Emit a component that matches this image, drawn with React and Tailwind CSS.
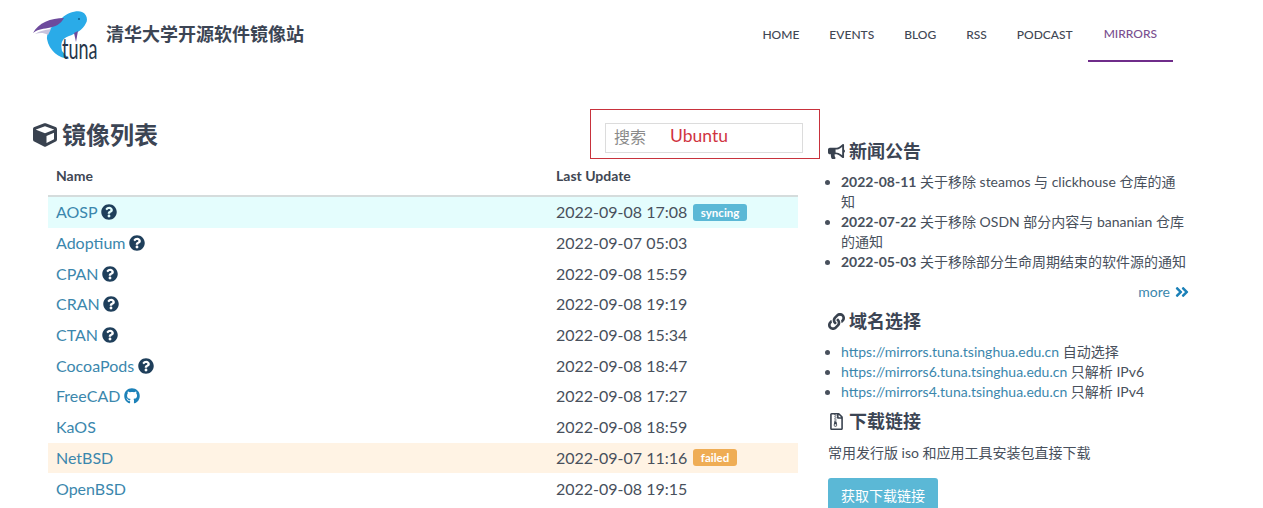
import {
  FaAngleDoubleRight,
  FaBullhorn,
  FaCube,
  FaGithub,
  FaLink,
  FaQuestionCircle,
  FaRegFileArchive,
} from "react-icons/fa";

const navItems = ["HOME", "EVENTS", "BLOG", "RSS", "PODCAST"];

const mirrors = [
  { name: "AOSP", time: "2022-09-08 17:08", icon: "help", status: "syncing" },
  { name: "Adoptium", time: "2022-09-07 05:03", icon: "help" },
  { name: "CPAN", time: "2022-09-08 15:59", icon: "help" },
  { name: "CRAN", time: "2022-09-08 19:19", icon: "help" },
  { name: "CTAN", time: "2022-09-08 15:34", icon: "help" },
  { name: "CocoaPods", time: "2022-09-08 18:47", icon: "help" },
  { name: "FreeCAD", time: "2022-09-08 17:27", icon: "github" },
  { name: "KaOS", time: "2022-09-08 18:59" },
  { name: "NetBSD", time: "2022-09-07 11:16", status: "failed" },
  { name: "OpenBSD", time: "2022-09-08 19:15" },
];

const domains = [
  { url: "https://mirrors.tuna.tsinghua.edu.cn", note: "自动选择" },
  { url: "https://mirrors6.tuna.tsinghua.edu.cn", note: "只解析 IPv6" },
  { url: "https://mirrors4.tuna.tsinghua.edu.cn", note: "只解析 IPv4" },
];

function Logo() {
  return (
    <div className="relative w-[66px] h-[50px] shrink-0">
      <svg viewBox="0 0 66 50" className="absolute left-0 top-0 w-[66px] h-[50px]">
        <path d="M29 7C34 2 44-1 49 1C54 3 55 9 53 12C50 19 42 23 36 25C30 27 27 31 29 40L36 48C26 47 16 40 14 28C13 20 22 12 29 7Z" fill="#2aabe8" />
        <path d="M0 22C5 12 18 7 31 7C28 13 22 16 15 17C8 18 4 19 0 22Z" fill="#6d4a9c" />
        <path d="M2 23C6 20 12 19 18 18L15 24C10 21 6 22 2 23Z" fill="#c9c3dd" />
        <path d="M41 22L45 20L43 31Z" fill="#6d4a9c" />
        <circle cx="46" cy="8" r="1" fill="#0d5d8a" />
      </svg>
      <span className="absolute left-[29px] top-[25px] origin-top-left scale-x-[0.62] text-[29px] leading-[24px] text-[#27364a] font-['Lato',sans-serif]">
        tuna
      </span>
    </div>
  );
}

function MirrorRow({ mirror }) {
  const bg =
    mirror.status === "syncing"
      ? "bg-[#e4fdfd]"
      : mirror.status === "failed"
        ? "bg-[#fff3e4]"
        : "bg-white";

  return (
    <div className={`flex items-center h-[30.7px] pl-2 ${bg}`}>
      <div className="w-[500px] flex items-center gap-[3.5px] text-[#3b87ad]">
        <span>{mirror.name}</span>
        {mirror.icon === "help" && <FaQuestionCircle className="text-[#1f3f5b] text-[16px]" />}
        {mirror.icon === "github" && <FaGithub className="text-[#1c81b8] text-[16px]" />}
      </div>
      <div className="flex items-center gap-[6px] text-[#48505c]">
        <span>{mirror.time}</span>
        {mirror.status === "syncing" && (
          <span className="h-[17px] px-[7.5px] rounded-[3px] bg-[#5bb8d6] text-white text-[11.5px] font-bold leading-[17px]">
            syncing
          </span>
        )}
        {mirror.status === "failed" && (
          <span className="h-[17px] px-[7.5px] rounded-[3px] bg-[#efad55] text-white text-[11.5px] font-bold leading-[17px]">
            failed
          </span>
        )}
      </div>
    </div>
  );
}

function SectionTitle({ icon, children }) {
  return (
    <h3 className="flex items-center gap-[4px] h-[24px] text-[18px] font-bold text-[#3c4554]">
      {icon}
      {children}
    </h3>
  );
}

export default function App() {
  return (
    <div className="relative h-[508px] w-[1263px] overflow-hidden bg-white text-[16px] text-[#48505c] font-['Lato','Noto_Sans_CJK_SC',sans-serif]">
      <header className="flex h-[62px] pl-[33px] pr-[90px] justify-between">
        <div className="flex items-start pt-[11px] gap-[7px]">
          <Logo />
          <span className="mt-[11px] text-[18px] font-bold leading-[24px] text-[#3c4554]">
            清华大学开源软件镜像站
          </span>
        </div>
        <nav className="flex text-[12px] font-medium text-[#3f4754]">
          {navItems.map((item) => (
            <a key={item} className="flex items-center h-[60px] pt-[10px] px-[15px]">
              {item}
            </a>
          ))}
          <a className="flex items-center h-[62px] pt-[8px] px-[16px] text-[#7a4f8f] border-b-2 border-[#6f2c8a]">
            MIRRORS
          </a>
        </nav>
      </header>

      <main className="flex pl-[33px]">
        <section className="w-[795px] shrink-0">
          <div className="flex items-center h-[30px] mt-[58px] gap-[5px] text-[24px] font-bold text-[#3c4554] relative">
            <FaCube className="text-[24px] text-[#39424f]" />
            <h2>镜像列表</h2>
            <div className="absolute left-[572px] top-[3px] flex items-center w-[198px] h-[30px] pl-[8px] pb-[2px] border border-[#dcdcdc] text-[16px] font-normal">
              <span className="text-[#8a8a8a] w-[56px]">搜索</span>
              <span className="mb-[2px] text-[#d0343f] text-[17.5px]">Ubuntu</span>
            </div>
          </div>

          <div className="ml-[15px] w-[750px] mt-[11px]">
            <div className="flex items-center h-[36px] pb-[5px] pl-2 border-b-2 border-[#d5dcdc] text-[14px] font-bold text-[#3f4754]">
              <div className="w-[500px]">Name</div>
              <div>Last Update</div>
            </div>
            {mirrors.map((mirror) => (
              <MirrorRow key={mirror.name} mirror={mirror} />
            ))}
          </div>
        </section>

        <aside className="w-[362px] text-[14px] leading-[20px] text-[#48505c]">
          <div className="mt-[77px]">
            <SectionTitle icon={<FaBullhorn className="text-[17px] text-[#39424f]" />}>
              新闻公告
            </SectionTitle>
          </div>
          <ul className="mt-[9px] ml-[13px] w-[347px] list-disc">
            <li>
              <b>2022-08-11</b> 关于移除 steamos 与 clickhouse 仓库的通知
            </li>
            <li>
              <b>2022-07-22</b> 关于移除 OSDN 部分内容与 bananian 仓库的通知
            </li>
            <li>
              <b>2022-05-03</b> 关于移除部分生命周期结束的软件源的通知
            </li>
          </ul>
          <div className="flex items-center justify-end gap-[4px] mt-[10px] text-[#3b87ad]">
            more
            <FaAngleDoubleRight className="text-[16px] text-[#1c81b8]" />
          </div>
          <div className="mt-[7px]">
            <SectionTitle icon={<FaLink className="text-[17px] text-[#39424f]" />}>
              域名选择
            </SectionTitle>
          </div>
          <ul className="mt-[9px] ml-[13px] list-disc">
            {domains.map((d) => (
              <li key={d.url}>
                <a className="text-[#3b87ad]">{d.url}</a> {d.note}
              </li>
            ))}
          </ul>
          <div className="mt-[7px]">
            <SectionTitle icon={<FaRegFileArchive className="text-[17px] text-[#39424f]" />}>
              下载链接
            </SectionTitle>
          </div>
          <p className="mt-[10px]">常用发行版 iso 和应用工具安装包直接下载</p>
          <button className="block mt-[15px] w-[110px] h-[36px] rounded-[3px] bg-[#5bb8d6] text-white text-[14px]">
            获取下载链接
          </button>
        </aside>
      </main>

      {/* red annotation round the search box */}
      <div className="absolute left-[590px] top-[109px] w-[230px] h-[50px] border border-[#c8323c]" />
    </div>
  );
}
